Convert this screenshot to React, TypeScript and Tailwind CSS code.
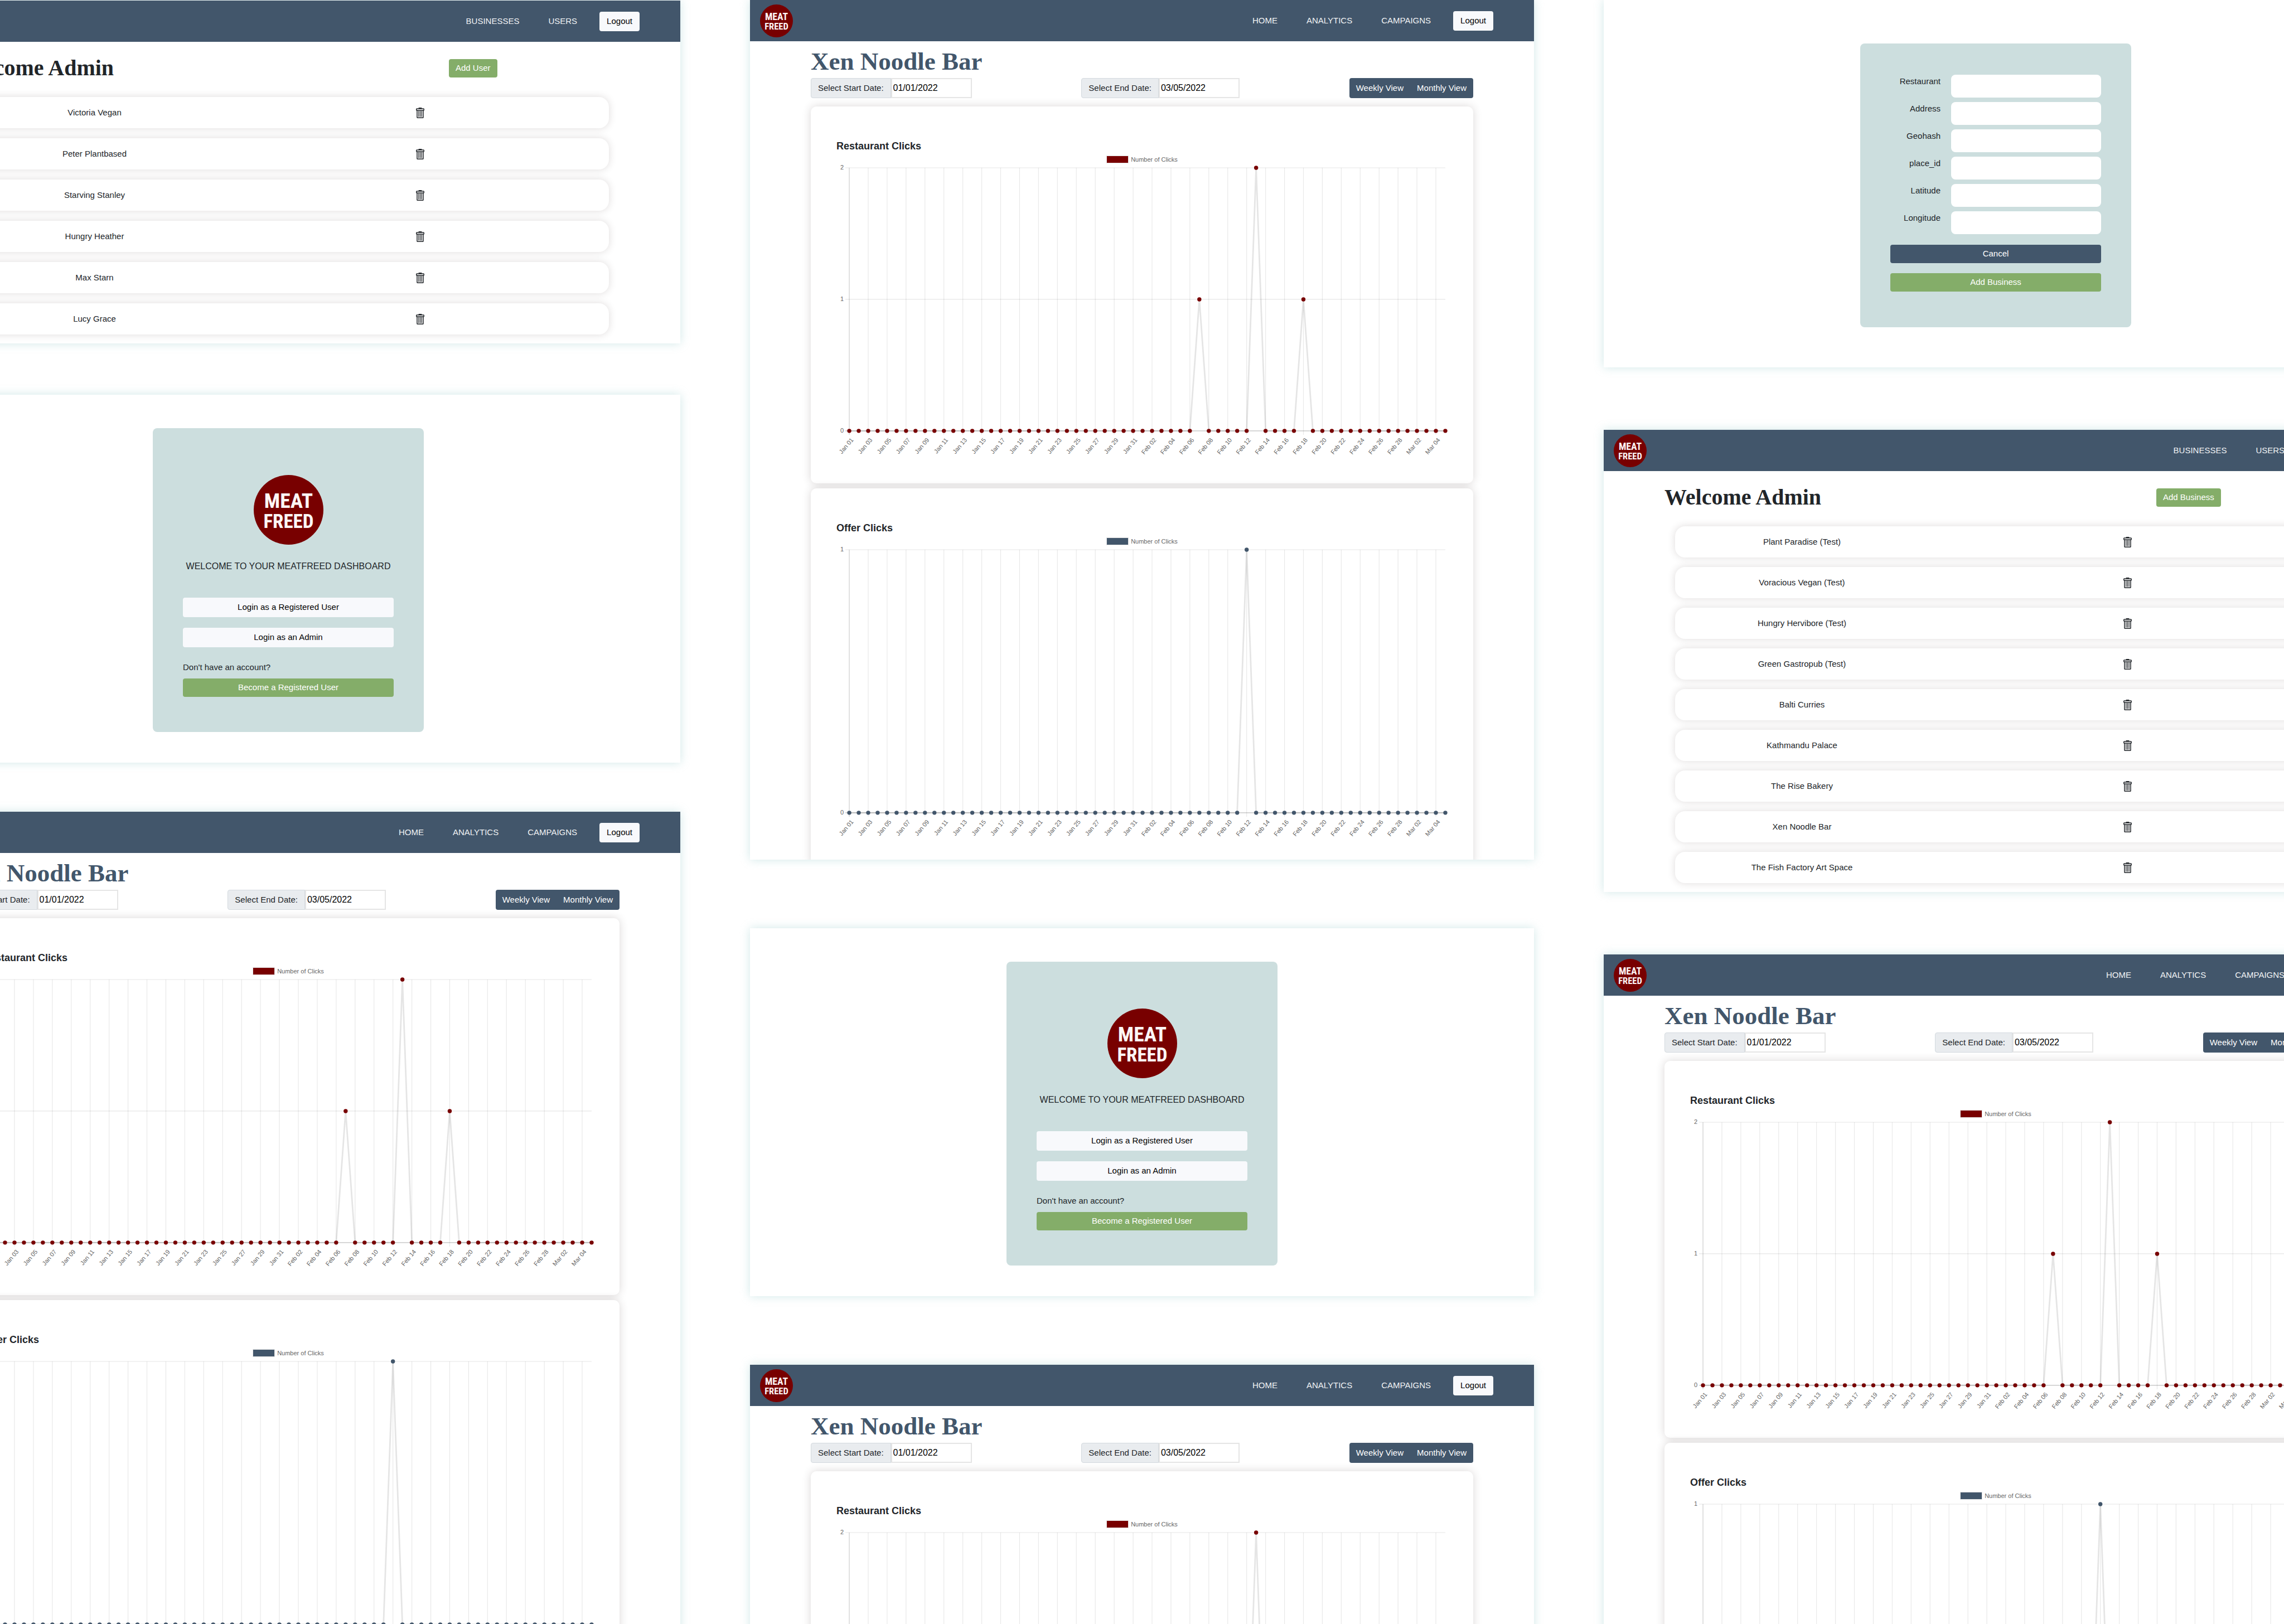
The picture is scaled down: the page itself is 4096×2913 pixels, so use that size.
import React, { useId } from "react";

const BODY = "font-['Liberation_Sans',Arial,sans-serif]";
const SERIF = "font-['Liberation_Serif',serif] font-bold";

function Logo({ className }: { className: string }) {
  return (
    <svg viewBox="0 0 100 100" className={className} role="img" aria-label="Meat Freed">
      <circle cx="50" cy="50" r="50" fill="#780000" />
      <g
        fill="#fdf6f6"
        textAnchor="middle"
        fontWeight="700"
        fontFamily="'Roboto Condensed','Liberation Sans Narrow','Liberation Serif',serif"
      >
        <text x="50" y="47" fontSize="30">MEAT</text>
        <text x="50" y="76" fontSize="28">FREED</text>
      </g>
    </svg>
  );
}

function TrashIcon() {
  return (
    <svg viewBox="0 0 60 76" className="h-[19px] w-[15px]" fill="none" stroke="#212529" aria-hidden="true">
      <rect x="18" y="0" width="24" height="8" rx="3" fill="#212529" stroke="none" />
      <rect x="3" y="7.500" width="54" height="12" rx="3" strokeWidth="6" />
      <path d="M8 20V70Q8 73 11.500 73H48.500Q52 73 52 70V20" strokeWidth="6" />
      <path d="M19.500 25V64M30 25V64M40.500 25V64" strokeWidth="5" strokeLinecap="round" />
    </svg>
  );
}

function Panel({ className = "", children }: { className?: string; children: React.ReactNode }) {
  return (
    <section
      className={`shrink-0 overflow-hidden bg-white shadow-[0_0_16px_rgba(190,222,222,0.7)] ${className}`}
    >
      {children}
    </section>
  );
}

function NavBar({ links }: { links: string[] }) {
  return (
    <header className="flex h-[74px] items-center bg-[#42566b] pr-[73px] pl-[18px]">
      <Logo className="size-[59px]" />
      <nav className="ml-auto flex items-center gap-[52px] text-[15px] text-[#f1f3f5]">
        {links.map((l) => (
          <a key={l} href="#">
            {l}
          </a>
        ))}
      </nav>
      <button className="ml-10 h-[35px] rounded bg-[#f8f9fc] px-[13px] text-[15px] text-black">Logout</button>
    </header>
  );
}

function LoginPanel() {
  return (
    <Panel className="flex h-[660px] items-start justify-center pt-[60px]">
      <div className="flex w-[486px] flex-col items-stretch rounded-lg bg-[#ccdede] px-[54px] pt-[84px] pb-[63px] text-[15px] text-[#212529]">
        <Logo className="size-[125px] self-center" />
        <h1 className="mt-[27px] text-center text-base leading-6 whitespace-nowrap">
          WELCOME TO YOUR MEATFREED DASHBOARD
        </h1>
        <button className="mt-11 h-[35px] rounded bg-[#f8f9fc] text-black">Login as a Registered User</button>
        <button className="mt-[19px] h-[35px] rounded bg-[#f8f9fc] text-black">Login as an Admin</button>
        <p className="mt-[25px] leading-[22px]">Don't have an account?</p>
        <button className="mt-[9px] h-[33px] rounded bg-[#84ad69] text-white">Become a Registered User</button>
      </div>
    </Panel>
  );
}

const FIELDS = ["Restaurant", "Address", "Geohash", "place_id", "Latitude", "Longitude"];

function BusinessFormPanel() {
  const id = useId();
  return (
    <Panel className="flex h-[659px] items-start justify-center pt-[78px]">
      <form className="w-[486px] rounded-lg bg-[#ccdede] px-[54px] pt-14 pb-16 text-[15px] text-[#212529]">
        <div className="flex flex-col gap-2">
          {FIELDS.map((f) => (
            <div key={f} className="flex items-start gap-[19px]">
              <label htmlFor={id + f} className="flex-1 text-right leading-6">
                {f}
              </label>
              <input id={id + f} type="text" className="h-[41px] w-[269px] rounded-lg bg-white px-3" />
            </div>
          ))}
        </div>
        <button type="button" className="mt-[19px] block h-[33px] w-full rounded bg-[#42566b] text-white">
          Cancel
        </button>
        <button type="button" className="mt-[18px] block h-[33px] w-full rounded bg-[#84ad69] text-white">
          Add Business
        </button>
      </form>
    </Panel>
  );
}

function AdminPanel({ action, names, gap }: { action: string; names: string[]; gap: string }) {
  return (
    <Panel className="pb-4">
      <NavBar links={["BUSINESSES", "USERS"]} />
      <div className="flex items-center px-[109px] pt-[23px]">
        <h1 className={`flex-1 text-[40px] leading-[48px] text-[#212529] ${SERIF}`}>Welcome Admin</h1>
        <div className="w-[306px]">
          <button className="h-[33px] rounded bg-[#84ad69] px-3 text-[15px] text-white">{action}</button>
        </div>
      </div>
      <ul className={`mt-7 flex flex-col px-32 ${gap}`}>
        {names.map((n) => (
          <li
            key={n}
            className="grid h-14 grid-cols-[455fr_677fr] items-center gap-x-[18px] rounded-[18px] bg-white text-center text-[15px] text-[#212529] shadow-[0_0_14px_rgba(60,40,40,0.17)]"
          >
            <span>{n}</span>
            <button aria-label={`Delete ${n}`} className="justify-self-center">
              <TrashIcon />
            </button>
          </li>
        ))}
      </ul>
    </Panel>
  );
}

function DateField({ label, value }: { label: string; value: string }) {
  const id = useId();
  return (
    <div className="flex h-9">
      <label
        htmlFor={id}
        className="flex items-center rounded-l border border-[#d3d9de] bg-[#e9ecef] px-3 text-[15px] text-[#212529]"
      >
        {label}
      </label>
      <input
        id={id}
        type="text"
        defaultValue={value}
        className="w-[145px] border-2 border-[#e5e5e5] bg-white px-0.5 text-base text-black"
      />
    </div>
  );
}

const MONTHS: [string, number][] = [
  ["Jan", 31],
  ["Feb", 28],
  ["Mar", 5],
];
const DAYS = MONTHS.flatMap(([m, n]) =>
  Array.from({ length: n }, (_, i) => `${m} ${String(i + 1).padStart(2, "0")}`)
);

const X0 = 23;
const X1 = 1090;
const Y_TOP = 7;
const Y_ZERO = 478;

function ClicksChart({
  title,
  color,
  max,
  clicks,
}: {
  title: string;
  color: string;
  max: number;
  clicks: Record<string, number>;
}) {
  const x = (i: number) => X0 + (i * (X1 - X0)) / (DAYS.length - 1);
  const y = (v: number) => Y_ZERO - (v * (Y_ZERO - Y_TOP)) / max;
  const points = DAYS.map((d, i) => ({ px: x(i), py: y(clicks[d] ?? 0) }));
  const ticks = Array.from({ length: max + 1 }, (_, v) => v);
  return (
    <article className="rounded-[10px] bg-white px-[46px] pt-[57px] pb-12 shadow-[0_0_16px_rgba(60,40,40,0.19)]">
      <h2 className="text-lg leading-7 font-bold text-[#212529]">{title}</h2>
      <div className="mt-0.5 flex h-4 items-center justify-center gap-1 text-[11px] text-[#666]">
        <span className="h-3.5 w-10 border border-[#e5e5e5]" style={{ backgroundColor: color }} />
        Number of Clicks
      </div>
      <svg viewBox="0 0 1094 524" className="block w-full overflow-visible" role="img" aria-label={title}>
        {ticks.map((v) => (
          <g key={v}>
            <line
              x1={X0 - 7}
              x2={X1}
              y1={y(v)}
              y2={y(v)}
              stroke="#000"
              strokeOpacity={v === 0 ? 0.25 : 0.1}
              strokeWidth="1.2"
            />
            <text x={X0 - 10} y={y(v) + 3} textAnchor="end" fontSize="11" fill="#666">
              {v}
            </text>
          </g>
        ))}
        {DAYS.map((d, i) =>
          i % 2 ? null : (
            <g key={d}>
              <line
                x1={x(i)}
                x2={x(i)}
                y1={Y_TOP}
                y2={Y_ZERO + 7}
                stroke="#000"
                strokeOpacity={i === 0 ? 0.2 : 0.09}
                strokeWidth="1.2"
              />
              <text
                transform={`translate(${x(i) + 5} ${Y_ZERO + 14}) rotate(-50)`}
                textAnchor="end"
                dominantBaseline="central"
                fontSize="11"
                fill="#666"
              >
                {d}
              </text>
            </g>
          )
        )}
        <polyline
          points={points.map((p) => `${p.px},${p.py}`).join(" ")}
          fill="none"
          stroke="#000"
          strokeOpacity="0.1"
          strokeWidth="2.8"
          strokeLinejoin="bevel"
        />
        {points.map((p) => (
          <circle key={p.px} cx={p.px} cy={p.py} r="3.7" fill={color} />
        ))}
      </svg>
    </article>
  );
}

const RESTAURANT_CLICKS = { "Feb 07": 1, "Feb 13": 2, "Feb 18": 1 };
const OFFER_CLICKS = { "Feb 12": 1 };

function AnalyticsPanel({ className = "" }: { className?: string }) {
  return (
    <Panel className={className}>
      <NavBar links={["HOME", "ANALYTICS", "CAMPAIGNS"]} />
      <div className="px-[109px] pt-3">
        <h1 className={`text-[45px] leading-[48px] text-[#42566b] ${SERIF}`}>Xen Noodle Bar</h1>
        <div className="mt-1.5 flex items-center justify-between">
          <DateField label="Select Start Date:" value="01/01/2022" />
          <DateField label="Select End Date:" value="03/05/2022" />
          <div className="flex h-9 overflow-hidden rounded bg-[#42566b] text-[15px] text-white">
            <button className="px-3">Weekly View</button>
            <button className="px-3">Monthly View</button>
          </div>
        </div>
        <div className="mt-[15px] flex flex-col gap-[9px]">
          <ClicksChart title="Restaurant Clicks" color="#780000" max={2} clicks={RESTAURANT_CLICKS} />
          <ClicksChart title="Offer Clicks" color="#42566b" max={1} clicks={OFFER_CLICKS} />
        </div>
      </div>
    </Panel>
  );
}

const USERS = [
  "Victoria Vegan",
  "Peter Plantbased",
  "Starving Stanley",
  "Hungry Heather",
  "Max Starn",
  "Lucy Grace",
];

const BUSINESSES = [
  "Plant Paradise (Test)",
  "Voracious Vegan (Test)",
  "Hungry Hervibore (Test)",
  "Green Gastropub (Test)",
  "Balti Curries",
  "Kathmandu Palace",
  "The Rise Bakery",
  "Xen Noodle Bar",
  "The Fish Factory Art Space",
];

export default function App() {
  return (
    <main className={`h-screen overflow-hidden bg-white ${BODY}`}>
      <div className="-mx-[186px] grid grid-cols-3 gap-x-[125px]">
        <div className="flex flex-col gap-[88px] pt-px">
          <div className="pb-1">
            <AdminPanel action="Add User" names={USERS} gap="gap-[18px]" />
          </div>
          <LoginPanel />
          <AnalyticsPanel />
        </div>
        <div className="flex flex-col gap-[123px]">
          <AnalyticsPanel className="h-[1542px]" />
          <LoginPanel />
          <AnalyticsPanel />
        </div>
        <div className="flex flex-col gap-28">
          <BusinessFormPanel />
          <AdminPanel action="Add Business" names={BUSINESSES} gap="gap-[17px]" />
          <AnalyticsPanel />
        </div>
      </div>
    </main>
  );
}
